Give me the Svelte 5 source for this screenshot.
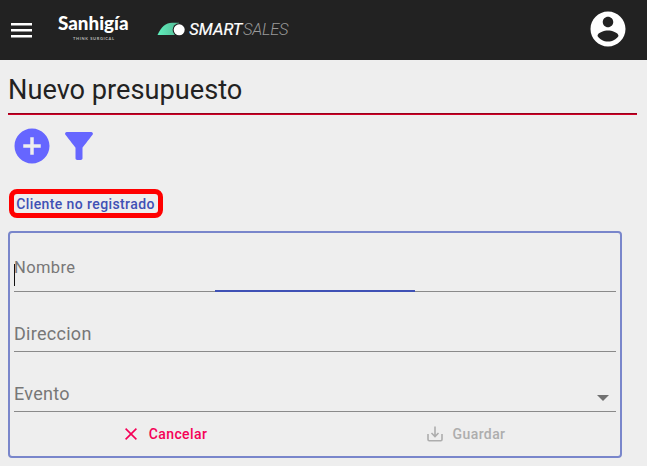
<script>
  const fields = [
    { label: 'Nombre', active: true },
    { label: 'Direccion' },
    { label: 'Evento', select: true }
  ];
</script>

<div class="page">
  <header>
    <svg class="menu" width="21" height="15" viewBox="0 0 21 15" fill="#fff">
      <path d="M0 0h21v2.5H0zM0 6h21v2.5H0zM0 12h21v2.5H0z" />
    </svg>
    <svg class="brand" width="76" height="36" viewBox="0 0 76 36" fill="#fff">
      <text class="name" x="1" y="23" textLength="70.5" lengthAdjust="spacingAndGlyphs">Sanhigía</text>
      <text class="tag" x="16" y="33" textLength="41" lengthAdjust="spacing">THINK SURGICAL</text>
    </svg>
    <svg class="sales" width="134" height="24" viewBox="0 0 134 24">
      <defs>
        <linearGradient id="wave" x1="0" x2="1">
          <stop offset="0" stop-color="#5ff0bd" />
          <stop offset="1" stop-color="#55b995" />
        </linearGradient>
      </defs>
      <path d="M0.5 17C4 9 9 4.800 15 4.800h7V17z" fill="url(#wave)" />
      <circle cx="22.2" cy="11.8" r="6.6" fill="#222" />
      <circle cx="22.2" cy="11.8" r="5.5" fill="#fff" />
      <text class="smart" x="32.3" y="17" textLength="53" lengthAdjust="spacing">SMART</text>
      <text class="thin" x="86" y="17" textLength="45.5" lengthAdjust="spacing">SALES</text>
    </svg>
    <svg class="user" width="42" height="42" viewBox="0 0 24 24" fill="#fff">
      <path d="M12 2C6.480 2 2 6.480 2 12s4.480 10 10 10 10-4.480 10-10S17.520 2 12 2zm0 3c1.660 0 3 1.340 3 3s-1.340 3-3 3-3-1.340-3-3 1.340-3 3-3zm0 14.200c-2.500 0-4.710-1.280-6-3.220.030-1.990 4-3.080 6-3.080 1.990 0 5.970 1.090 6 3.080-1.290 1.940-3.500 3.220-6 3.220z" />
    </svg>
  </header>

  <h1>Nuevo presupuesto</h1>

  <div class="tools">
    <svg width="42" height="42" viewBox="0 0 24 24" fill="#6666ff">
      <path d="M12 2C6.480 2 2 6.480 2 12s4.480 10 10 10 10-4.480 10-10S17.520 2 12 2zm5 11h-4v4h-2v-4H7v-2h4V7h2v4h4v2z" />
    </svg>
    <svg width="42" height="42" viewBox="0 0 24 24" fill="#6666ff">
      <path d="M4.250 5.610C6.270 8.200 10 13 10 13v6c0 .550.450 1 1 1h2c.550 0 1-.450 1-1v-6s3.720-4.800 5.740-7.390A.998.998 0 0 0 18.950 4H5.040c-.830 0-1.300.950-.790 1.610z" />
    </svg>
  </div>

  <button class="client">Cliente no registrado</button>

  <form>
    {#each fields as field}
      <div class="field" class:active={field.active}>
        <span class="label">{field.label}</span>
        {#if field.active}<i class="caret"></i><i class="bar"></i>{/if}
        {#if field.select}
          <svg class="arrow" width="12" height="6" viewBox="0 0 12 6"><path d="M0 0h12L6 6z" fill="#707070" /></svg>
        {/if}
      </div>
    {/each}
    <div class="actions">
      <button type="button" class="cancel">
        <svg width="12" height="12" viewBox="0 0 12 12" fill="none" stroke="currentColor" stroke-width="1.6"><path d="M.6.6l10.800 10.800M11.400.6L.6 11.400" /></svg>
        Cancelar
      </button>
      <button type="button" class="save">
        <svg width="16" height="16" viewBox="0 0 16 16" fill="none" stroke="currentColor" stroke-width="1.6"><path d="M1 8v5.500q0 1.200 1.200 1.200h11.600q1.200 0 1.200-1.200V8M8 .5v10M4.500 7L8 10.500 11.500 7" /></svg>
        Guardar
      </button>
    </div>
  </form>
</div>

<style>
  :global(body) { margin: 0; background: #eee; }
  .page {
    box-sizing: border-box;
    height: 466px;
    overflow: hidden;
    background: #eee;
    font-family: Roboto, sans-serif;
    color: #222;
  }
  svg { display: block; flex: none; }
  header {
    box-sizing: border-box;
    height: 60px;
    padding: 0 18px 0 11px;
    display: flex;
    align-items: flex-start;
    background: #222;
  }
  .menu { margin-top: 23px; }
  .brand { margin: 7px 0 0 25px; overflow: visible; }
  .sales { margin: 18px 0 0 24px; }
  .user { margin: 8px 0 0 auto; }
  .name { font: 900 19.5px Lato, sans-serif; }
  .tag { font: 700 4px Lato, sans-serif; fill: #bbb; }
  .smart { font: italic 400 16.5px Roboto, sans-serif; fill: #fff; stroke: #fff; stroke-width: 0.2px; }
  .thin { font: italic 300 16.5px Roboto, sans-serif; fill: #999; }
  h1 {
    box-sizing: border-box;
    height: 54px;
    margin: 0 10px 1px 8px;
    padding-top: 12px;
    border-bottom: 1px solid #98001c;
    box-shadow: 0 1px #d00024;
    font-size: 27.2px;
    line-height: 36px;
    font-weight: 400;
  }
  .tools { display: flex; gap: 5px; padding: 10px 0 0 10.5px; }
  button {
    margin: 0;
    padding: 0;
    border: 0;
    background: none;
    font: 500 14px Roboto, sans-serif;
    letter-spacing: 0.4px;
  }
  .client {
    display: block;
    box-sizing: border-box;
    width: 154px;
    height: 29px;
    margin: 22px 0 0 9px;
    padding: 1px 1px 0 0;
    border: 5px solid #f00;
    border-radius: 8px;
    color: #3f51b5;
    line-height: 19px;
    white-space: nowrap;
  }
  form {
    box-sizing: border-box;
    width: 614px;
    height: 227px;
    margin: 13px 0 0 8px;
    padding: 0 4px;
    border: 2px solid #7986cb;
    border-radius: 4px;
  }
  .field {
    position: relative;
    box-sizing: border-box;
    height: 60px;
    border-bottom: 1px solid #8a8a8a;
    display: flex;
    align-items: flex-end;
    padding-bottom: 6px;
    color: #777;
    font-size: 18px;
    line-height: 22px;
    letter-spacing: 0.28px;
  }
  .field.active { height: 59px; padding-bottom: 12px; font-size: 16.5px; letter-spacing: 0.38px; }
  .caret { position: absolute; left: 0; top: 31px; width: 1px; height: 22px; background: #111; }
  .bar { position: absolute; left: 201px; bottom: -1px; width: 200px; height: 2px; background: #3f51b5; }
  .arrow { margin: 0 7px 4px auto; }
  .actions { display: grid; grid-template-columns: 1fr 1fr; height: 44px; }
  .actions button { display: flex; align-items: center; justify-content: center; gap: 12px; }
  .actions .cancel { color: #f50057; padding-left: 3px; }
  .actions .save { color: #adadad; gap: 10px; padding-left: 1px; }
</style>
